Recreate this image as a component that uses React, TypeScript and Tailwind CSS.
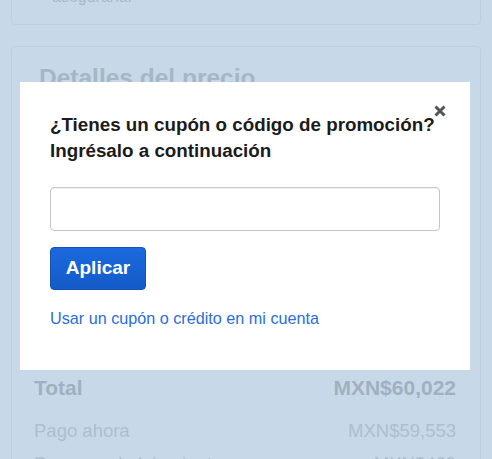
import React from "react";

const faded = "text-[#a9bac8]";

function CloseIcon() {
  return (
    <svg viewBox="0 0 12 12" className="h-[12px] w-[12px]" aria-hidden="true">
      <path d="M1.5 1.5 L10.5 10.5 M10.5 1.5 L1.5 10.5" stroke="#555555" strokeWidth="3" strokeLinecap="butt" />
    </svg>
  );
}

export default function App() {
  return (
    <div className="relative h-[459px] w-[492px] overflow-hidden bg-[#c7d9e8] font-['Liberation_Sans',Arial,sans-serif]">
      {/* page behind the overlay */}
      <div className="px-[11px]">
        <div className="-mt-[40px] rounded-[4px] border border-[#bdd0e0] pb-[15px] pl-[40px] pt-[24px]">
          <p className={`text-[16px] leading-6 ${faded}`}>asegurarla.</p>
        </div>

        <div className="mt-[21px] rounded-[4px] border border-[#bdd0e0] pl-[22px] pr-[24px] pt-[16px]">
          <h2 className="pl-[5px] text-[24.5px] font-bold leading-[30px] text-[#a5b7c6]">
            Detalles del precio
          </h2>
          <div className="h-[283px]" />
          <div className="flex items-center justify-between text-[21px] font-bold leading-[24px] text-[#9fb1c0]">
            <span>Total</span>
            <span>MXN$60,022</span>
          </div>
          <div className="mt-[19px] flex items-center justify-between text-[18.5px] leading-[24px] text-[#adbfcd]">
            <span>Pago ahora</span>
            <span>MXN$59,553</span>
          </div>
          <div className="mt-[9px] flex items-center justify-between text-[18.5px] leading-[24px] text-[#adbfcd]">
            <span>Pago en el alojamiento</span>
            <span>MXN$469</span>
          </div>
        </div>
      </div>

      {/* coupon dialog */}
      <div className="absolute left-[20px] top-[82px] h-[288px] w-[450px] bg-white pl-[30px] pr-[20px] pt-[30px]">
        <button type="button" className="absolute right-[24px] top-[23px]" aria-label="Cerrar">
          <CloseIcon />
        </button>
        <h3 className="text-[18.8px] font-bold leading-[26px] text-[#1b1b1b]">
          ¿Tienes un cupón o código de promoción?
          <br />
          Ingrésalo a continuación
        </h3>
        <input
          type="text"
          className="mt-[23px] block h-[44px] w-[390px] rounded-[4px] border border-[#c6c6c6] bg-white px-3 shadow-[inset_0_1px_1px_rgba(0,0,0,0.06)] outline-none"
        />
        <button
          type="button"
          className="mt-[16px] h-[43px] w-[96px] rounded-[4px] border border-[#1452b5] bg-gradient-to-b from-[#1b69de] to-[#145bc8] text-[19px] font-bold text-white"
        >
          Aplicar
        </button>
        <a href="#" className="mt-[16px] block text-[16.2px] leading-6 text-[#2a6ddb]">
          Usar un cupón o crédito en mi cuenta
        </a>
      </div>
    </div>
  );
}
